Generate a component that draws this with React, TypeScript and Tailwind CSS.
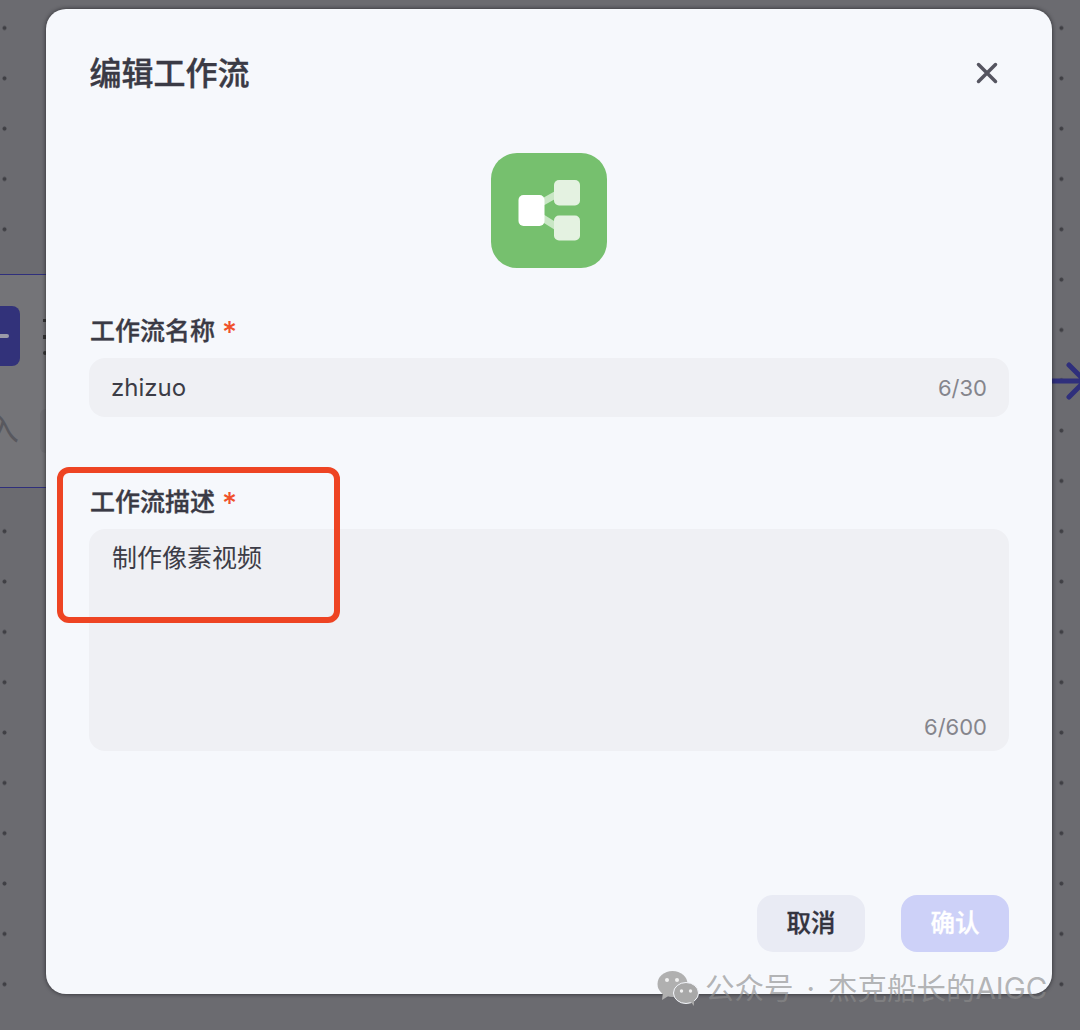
import React from "react";

const CJK = "font-['Inter','Noto_Sans_CJK_SC',sans-serif]";

function Label({ text }: { text: string }) {
  return (
    <div className="flex items-center h-[27px] text-[25px] leading-[27px] font-medium text-[#3a3a45] [-webkit-text-stroke:0.35px_#3a3a45]">
      <span>{text}</span>
      <span className="ml-[7px] h-[27px] text-[#f0512b] text-[29px] leading-[28px] font-['Inter'] font-medium [-webkit-text-stroke:0]">*</span>
    </div>
  );
}

function FlowIcon() {
  return (
    <div className="w-[116px] h-[115px] rounded-[26px] bg-[#76c06e] flex items-center justify-center">
      <svg width="116" height="115" viewBox="0 0 116 115">
        <path d="M50 50 L66 41 M50 64 L66 74" stroke="#c9e7c5" strokeWidth="7" fill="none" />
        <rect x="27.5" y="42" width="26" height="31" rx="5" fill="#ffffff" />
        <rect x="63" y="27" width="26" height="25.5" rx="5" fill="#e4f2e1" />
        <rect x="63" y="62.5" width="26" height="25" rx="5" fill="#e4f2e1" />
      </svg>
    </div>
  );
}

function WeChat() {
  return (
    <svg width="42" height="36" viewBox="0 0 42 36">
      <ellipse cx="15.5" cy="14" rx="15" ry="13" fill="#b0b0b0" />
      <path d="M6 22 L5 30 L13 25 Z" fill="#b0b0b0" />
      <ellipse cx="29" cy="23" rx="12.5" ry="10.5" fill="#a8a8a8" stroke="#f5f7fc" strokeWidth="1" />
      <path d="M33 31 L37 36 L37 28 Z" fill="#a8a8a8" />
      <circle cx="10" cy="10" r="2" fill="#f0f0f0" />
      <circle cx="20" cy="10" r="2" fill="#f0f0f0" />
      <circle cx="24.5" cy="21" r="1.7" fill="#f0f0f0" />
      <circle cx="33.5" cy="21" r="1.7" fill="#f0f0f0" />
    </svg>
  );
}

export default function App() {
  return (
    <div
      className={`relative w-[1080px] h-[1030px] overflow-hidden bg-[#6b6b70] pl-[46px] pt-[9px] ${CJK} bg-[radial-gradient(circle,#3f3f44_0,#3f3f44_1.6px,transparent_2.4px)] bg-[length:50.33px_50.33px] bg-[position:-20.67px_2.83px]`}
    >
      {/* canvas content dimmed beneath the dialog */}
      <div className="absolute left-0 top-[274px] w-[60px] h-[214px] bg-[#747478] border-y border-[#2f2f7c]">
        <div className="absolute left-0 top-[31px] w-[20px] h-[60px] rounded-r-[8px] bg-[#32327a] flex items-center">
          <div className="w-[9px] h-[4px] rounded-r-full bg-[#9a9aa8]" />
        </div>
        <div className="absolute left-[43px] top-[44px] w-[3px] h-[3px] bg-[#333]" />
        <div className="absolute left-[43px] top-[60px] w-[4px] h-[4px] bg-[#333]" />
        <div className="absolute left-[43px] top-[76px] w-[4px] h-[4px] rounded-full bg-[#333]" />
        <div className="absolute left-[-13px] top-[136px] text-[32px] leading-[36px] text-[#58585e]">入</div>
        <div className="absolute left-[40px] top-[134px] w-[20px] h-[44px] rounded-l-[6px] bg-[#6e6e72]" />
      </div>
      <svg className="absolute left-[1040px] top-[360px]" width="40" height="42" viewBox="0 0 40 42">
        <path d="M0 21 H40 M29 5 L45 21 L29 37" stroke="#2f2f7c" strokeWidth="5" strokeLinecap="round" fill="none" />
      </svg>

      {/* dialog */}
      <div className="relative w-[1006px] h-[985px] rounded-[20px] bg-[#f6f8fc] shadow-[0_0_4px_rgba(20,20,25,0.75)] px-[43px] flex flex-col">
        <div className="flex items-center justify-between h-[32px] mt-[49px]">
          <h1 className="pl-[0.5px] text-[32px] leading-[32px] font-medium text-[#3a3a45] [-webkit-text-stroke:0.4px_#3a3a45]">编辑工作流</h1>
          <svg className="mr-[10px] -mt-[2px]" width="24" height="24" viewBox="0 0 24 24">
            <path d="M3.5 3.5 L20.5 20.5 M20.5 3.5 L3.5 20.5" stroke="#555560" strokeWidth="3.5" strokeLinecap="round" />
          </svg>
        </div>

        <div className="flex justify-center mt-[63px] pr-[1px]">
          <FlowIcon />
        </div>

        <div className="mt-[50px] pl-[1px]">
          <Label text="工作流名称" />
        </div>
        <div className="mt-[13px] h-[59px] rounded-[16px] bg-[#eff0f4] flex items-center justify-between pl-[22px] pr-[22px]">
          <span className="text-[24px] leading-[30px] text-[#3c3c46]">zhizuo</span>
          <span className="text-[22px] leading-[26px] text-[#85858c]">6/30</span>
        </div>

        <div className="mt-[72px] pl-[1px]">
          <Label text="工作流描述" />
        </div>
        <div className="mt-[13px] h-[222px] rounded-[16px] bg-[#eff0f4] flex flex-col justify-between pl-[23px] pr-[22px] pt-[12px] pb-[11px]">
          <span className="text-[25px] leading-[34px] text-[#3c3c46]">制作像素视频</span>
          <span className="self-end text-[22px] leading-[26px] text-[#85858c]">6/600</span>
        </div>

        <div className="flex justify-end gap-[36px] mt-[144px]">
          <button className="w-[108px] h-[57px] rounded-[16px] bg-[#e9ebf4] text-[24.5px] font-medium text-[#33343f] [-webkit-text-stroke:0.35px_#33343f]">取消</button>
          <button className="w-[108px] h-[57px] rounded-[16px] bg-[#cdd1f8] text-[24.5px] font-medium text-[#ffffff] [-webkit-text-stroke:0.35px_#ffffff]">确认</button>
        </div>
      </div>

      {/* annotation */}
      <div className="absolute left-[57px] top-[467px] w-[283px] h-[156px] rounded-[12px] border-[6px] border-[#ee4423]" />

      {/* watermark */}
      <div className="absolute left-[657px] top-[970px] flex items-center">
        <WeChat />
        <span className="ml-[8px] -translate-x-[2px] text-[29.5px] leading-[36px] text-[rgba(140,140,140,0.65)] whitespace-nowrap">
          公众号<span className="mx-[13px]">·</span>杰克船长的AIGC
        </span>
      </div>
    </div>
  );
}
